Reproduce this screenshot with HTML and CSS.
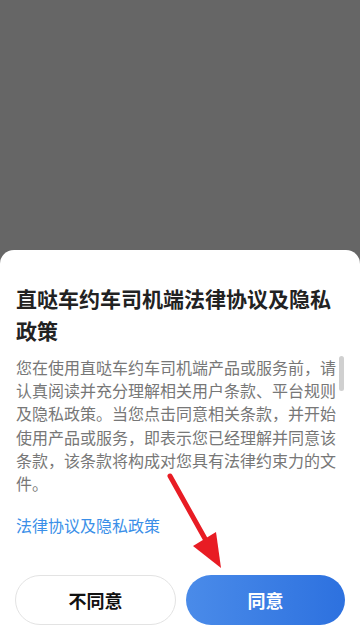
FILE: index.html
```html
<!DOCTYPE html>
<html lang="zh-CN">
<head>
<meta charset="utf-8">
<meta name="viewport" content="width=device-width, initial-scale=1">
<title>法律协议及隐私政策</title>
<link rel="stylesheet" href="styles.css">
</head>
<body>
<div class="screen">
  <div class="sheet">
    <h1 class="title">直哒车约车司机端法律协议及隐私政策</h1>
    <div class="content">
      <p class="body-text">您在使用直哒车约车司机端产品或服务前，请认真阅读并充分理解相关用户条款、平台规则及隐私政策。当您点击同意相关条款，并开始使用产品或服务，即表示您已经理解并同意该条款，该条款将构成对您具有法律约束力的文件。</p>
      <div class="scroll-thumb"></div>
    </div>
    <a class="link" href="#">法律协议及隐私政策</a>
    <div class="actions">
      <button class="btn btn-decline">不同意</button>
      <button class="btn btn-agree">同意</button>
    </div>
  </div>
  <svg class="arrow" width="360" height="639" viewBox="0 0 360 639">
    <line x1="170" y1="476" x2="208" y2="544" stroke="#e81c24" stroke-width="5" stroke-linecap="round"/>
    <polygon points="221,568 193,546 216,532" fill="#e81c24"/>
  </svg>
</div>
</body>
</html>
```

FILE: styles.css
```css
* { box-sizing: border-box; }
html, body { margin: 0; padding: 0; }
body {
  background: #666666;
  font-family: "Noto Sans CJK SC", "Noto Sans", sans-serif;
}
.screen {
  position: relative;
  width: 360px;
  height: 639px;
  display: flex;
  flex-direction: column;
  justify-content: flex-end;
  overflow: hidden;
}
.sheet {
  background: #ffffff;
  border-radius: 14px 14px 0 0;
  padding: 32px 15px 14px 15px;
  display: flex;
  flex-direction: column;
}
.title {
  margin: 0;
  padding-left: 1px;
  width: 330px;
  font-size: 21px;
  line-height: 32px;
  font-weight: 700;
  color: #222222;
}
.content {
  position: relative;
  margin-top: 10px;
  height: 140px;
}
.body-text {
  margin: 0;
  padding-left: 1px;
  width: 321px;
  font-size: 16px;
  line-height: 23.2px;
  color: #777777;
}
.scroll-thumb {
  position: absolute;
  left: 324px;
  top: 0;
  width: 5px;
  height: 35px;
  border-radius: 3px;
  background: #d0d0d0;
}
.link {
  margin-top: 18px;
  padding-left: 1px;
  font-size: 16px;
  line-height: 23px;
  color: #3a8fe8;
  text-decoration: none;
}
.actions {
  margin-top: 38px;
  display: flex;
  gap: 10px;
}
.btn {
  flex: 1;
  height: 50px;
  border-radius: 25px;
  font-family: "Noto Sans CJK SC", "Noto Sans", sans-serif;
  font-size: 18px;
  font-weight: 700;
  cursor: pointer;
}
.btn-decline {
  background: #ffffff;
  border: 1px solid #e3e3e3;
  color: #111111;
}
.btn-agree {
  border: none;
  color: #ffffff;
  background: linear-gradient(90deg, #4a8be9 0%, #2d71df 100%);
}
.arrow {
  position: absolute;
  left: 0;
  top: 0;
  pointer-events: none;
}
```
